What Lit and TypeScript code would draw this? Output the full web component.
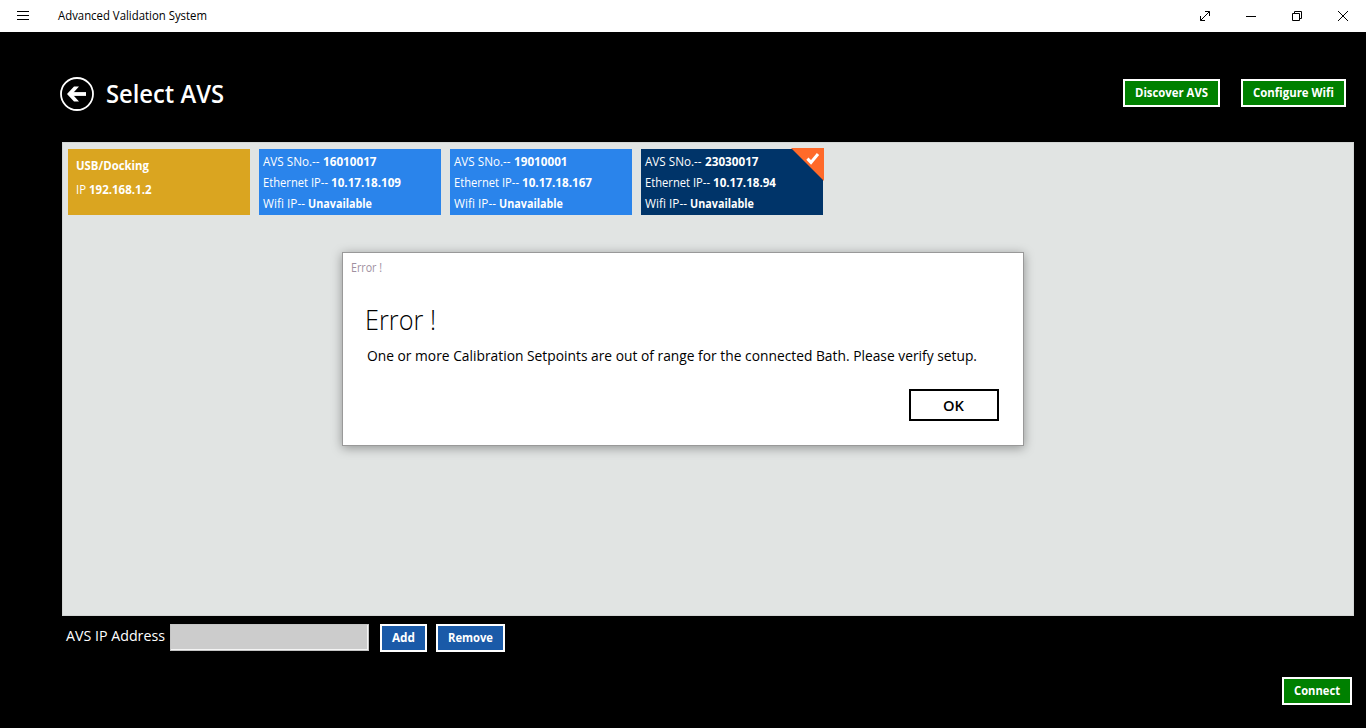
import { LitElement, html, css, svg } from "lit";
import { customElement, property } from "lit/decorators.js";

/* A single run of text with a fixed advance width. */
@customElement("text-run")
class TextRun extends LitElement {
  @property() text = "";
  @property({ type: Number }) width = 50;
  @property({ type: Number }) base = 16;
  @property({ type: Number }) height = 21;

  static styles = css`
    :host { display: block; flex: none; }
    svg { display: block; overflow: visible; }
    text { fill: currentColor; white-space: pre; }
  `;

  render() {
    return html`<svg width=${this.width} height=${this.height}>
      ${svg`<text x="0" y=${this.base} textLength=${this.width} lengthAdjust="spacingAndGlyphs">${this.text}</text>`}
    </svg>`;
  }
}

const run = (text: string, width: number, height = 21, base = 16) =>
  html`<text-run .text=${text} .width=${width} .height=${height} .base=${base}></text-run>`;

type Row = [string, number, string, number];

@customElement("avs-tile")
class AvsTile extends LitElement {
  @property({ attribute: false }) rows: Row[] = [];
  @property({ type: Boolean, reflect: true }) selected = false;

  static styles = css`
    :host {
      display: block; position: relative; box-sizing: border-box;
      width: 182px; height: 66px; padding: 1px 0 0 4px;
      background: #2a84eb; color: #fff; font-size: 12px;
    }
    :host([selected]) { background: #003469; }
    .row { display: flex; gap: 3px; height: 21px; }
    .value { font-weight: 700; }
    .mark { position: absolute; top: -1px; right: -1px; display: block; }
  `;

  render() {
    return html`
      ${this.rows.map(([k, kw, v, vw]) => html`
        <div class="row">${run(k, kw)}<span class="value">${run(v, vw)}</span></div>`)}
      ${this.selected ? html`<svg class="mark" width="33" height="33">
        <path d="M0 0H33V33Z" fill="#ff6a2a" />
        <path d="M16.4 10.6L20 14.4L27 6" fill="none" stroke="#fff" stroke-width="3" />
      </svg>` : null}`;
  }
}

@customElement("app-root")
class AppRoot extends LitElement {
  static styles = css`
    * { box-sizing: border-box; }
    :host {
      display: flex; flex-direction: column; position: relative;
      width: 1366px; height: 728px; overflow: hidden;
      background: #000; color: #fff;
      font: 12px "Open Sans", "Noto Sans", sans-serif;
    }
    .bar { display: flex; height: 32px; background: #fff; color: #000; padding-left: 17px; flex: none; }
    .bar svg { display: block; }
    .name { margin-left: 29px; }
    .controls { display: flex; margin-left: auto; }
    .head { display: flex; height: 110px; padding: 44px 20px 0 59px; flex: none; }
    .title { margin-left: 11px; font-size: 25.5px; font-weight: 600; }
    .actions { display: flex; gap: 21px; margin: 3px 0 0 auto; }
    .btn {
      display: flex; justify-content: center; height: 28px; padding: 0;
      border: 2px solid #fff; border-radius: 0; background: #008000; color: #fff;
      font: 700 12px "Open Sans", "Noto Sans", sans-serif;
    }
    .discover { width: 97px; }
    .configure { width: 105px; }
    .panel {
      display: flex; gap: 9px; align-items: flex-start; flex: none;
      width: 1292px; height: 474px; margin-left: 62px; padding: 6px 5px;
      background: #e1e4e3; border: 1px solid #d3d6d5;
    }
    .usb { width: 182px; height: 66px; padding: 5px 8px; background: #daa520; }
    .usbname, .usbip { font-weight: 700; }
    .usbrow { display: flex; gap: 3px; margin-top: 3px; }
    .foot { display: flex; padding: 8px 0 0 66px; height: 61px; flex: none; }
    .foot .label { font-size: 15px; width: 104px; }
    .field {
      width: 199px; height: 27px; margin-right: 11px; padding: 0;
      background: #ccc; border: 1px solid #c4c4c4; border-radius: 0;
      box-shadow: inset -1px -1px 0 #f4f4f4;
    }
    .blue { background: #1a5aa8; }
    .add { width: 47px; margin-right: 9px; }
    .remove { width: 69px; }
    .end { display: flex; justify-content: flex-end; padding-right: 14px; }
    .connect { width: 70px; }
    .dialog {
      position: absolute; left: 342px; top: 252px; width: 682px; height: 194px;
      background: #fff; border: 1px solid #999; color: #000;
      box-shadow: 0 2px 10px rgba(0, 0, 0, 0.36);
      display: flex; flex-direction: column;
    }
    .caption { padding: 3px 0 0 8px; color: #a090a0; height: 47px; }
    .heading { padding-left: 22px; font-size: 27px; font-weight: 300; height: 42px; }
    .message { padding-left: 24px; font-size: 15px; height: 47px; font-weight: 400; }
    .ok {
      display: flex; justify-content: center; width: 90px; height: 32px; margin: 0 24px 0 auto; padding: 0 2px 0 0;
      border: 2px solid #000; background: #fff; color: #000; border-radius: 0;
      font: 600 15px "Open Sans", "Noto Sans", sans-serif;
    }
  `;

  private tiles: { rows: Row[]; selected?: boolean }[] = [
    { rows: [["AVS SNo.--", 56.5, "16010017", 53.5], ["Ethernet IP--", 65, "10.17.18.109", 70], ["Wifi IP--", 42, "Unavailable", 64]] },
    { rows: [["AVS SNo.--", 56.5, "19010001", 53.5], ["Ethernet IP--", 65, "10.17.18.167", 70], ["Wifi IP--", 42, "Unavailable", 64]] },
    { rows: [["AVS SNo.--", 56.5, "23030017", 53.5], ["Ethernet IP--", 65, "10.17.18.94", 63], ["Wifi IP--", 42, "Unavailable", 64]], selected: true },
  ];

  render() {
    return html`
      <div class="bar">
        <svg width="12" height="32" shape-rendering="crispEdges"><path d="M0 11.5H12M0 15.5H12M0 19.5H12" stroke="#000" /></svg>
        <div class="name">${run("Advanced Validation System", 149, 32, 20)}</div>
        <div class="controls">
          <svg width="46" height="32" fill="none" stroke="#000"><path d="M18.5 20.5L27.5 11.5M23 11.5H27.5V16M18.5 16V20.5H23" /></svg>
          <svg width="46" height="32" fill="none" stroke="#000"><path d="M18 16.5H28" /></svg>
          <svg width="46" height="32" fill="none" stroke="#000"><path d="M18.5 13.5H25.5V20.5H18.5ZM20.5 13.5V11.5H27.5V18.5H25.5" /></svg>
          <svg width="46" height="32" fill="none" stroke="#000"><path d="M18 11L28 21M28 11L18 21" /></svg>
        </div>
      </div>
      <div class="head">
        <svg width="36" height="36" fill="none" stroke="#fff">
          <circle cx="18" cy="18" r="16" stroke-width="1.8" />
          <path d="M11 18H27" stroke-width="3.8" />
          <path d="M8 18L15 10.4H20L13.2 18L20 25.6H15Z" fill="#fff" stroke="none" />
        </svg>
        <div class="title">${run("Select AVS", 118, 40, 27)}</div>
        <div class="actions">
          <button class="btn discover">${run("Discover AVS", 73, 24, 16)}</button>
          <button class="btn configure">${run("Configure Wifi", 81, 24, 16)}</button>
        </div>
      </div>
      <div class="panel">
        <div class="usb">
          <div class="usbname">${run("USB/Docking", 73)}</div>
          <div class="usbrow">${run("IP", 10)}<span class="usbip">${run("192.168.1.2", 62.5)}</span></div>
        </div>
        ${this.tiles.map((t) => html`<avs-tile .rows=${t.rows} ?selected=${t.selected}></avs-tile>`)}
      </div>
      <div class="foot">
        <div class="label">${run("AVS IP Address", 99, 27, 17)}</div>
        <input class="field" />
        <button class="btn blue add">${run("Add", 23, 24, 16)}</button>
        <button class="btn blue remove">${run("Remove", 45, 24, 16)}</button>
      </div>
      <div class="end"><button class="btn connect">${run("Connect", 46, 24, 16)}</button></div>
      <div class="dialog">
        <div class="caption">${run("Error !", 31)}</div>
        <div class="heading">${run("Error !", 71, 42, 30)}</div>
        <div class="message">${run("One or more Calibration Setpoints are out of range for the connected Bath. Please verify setup.", 610, 30, 19)}</div>
        <button class="ok">${run("OK", 21, 28, 20)}</button>
      </div>`;
  }
}
